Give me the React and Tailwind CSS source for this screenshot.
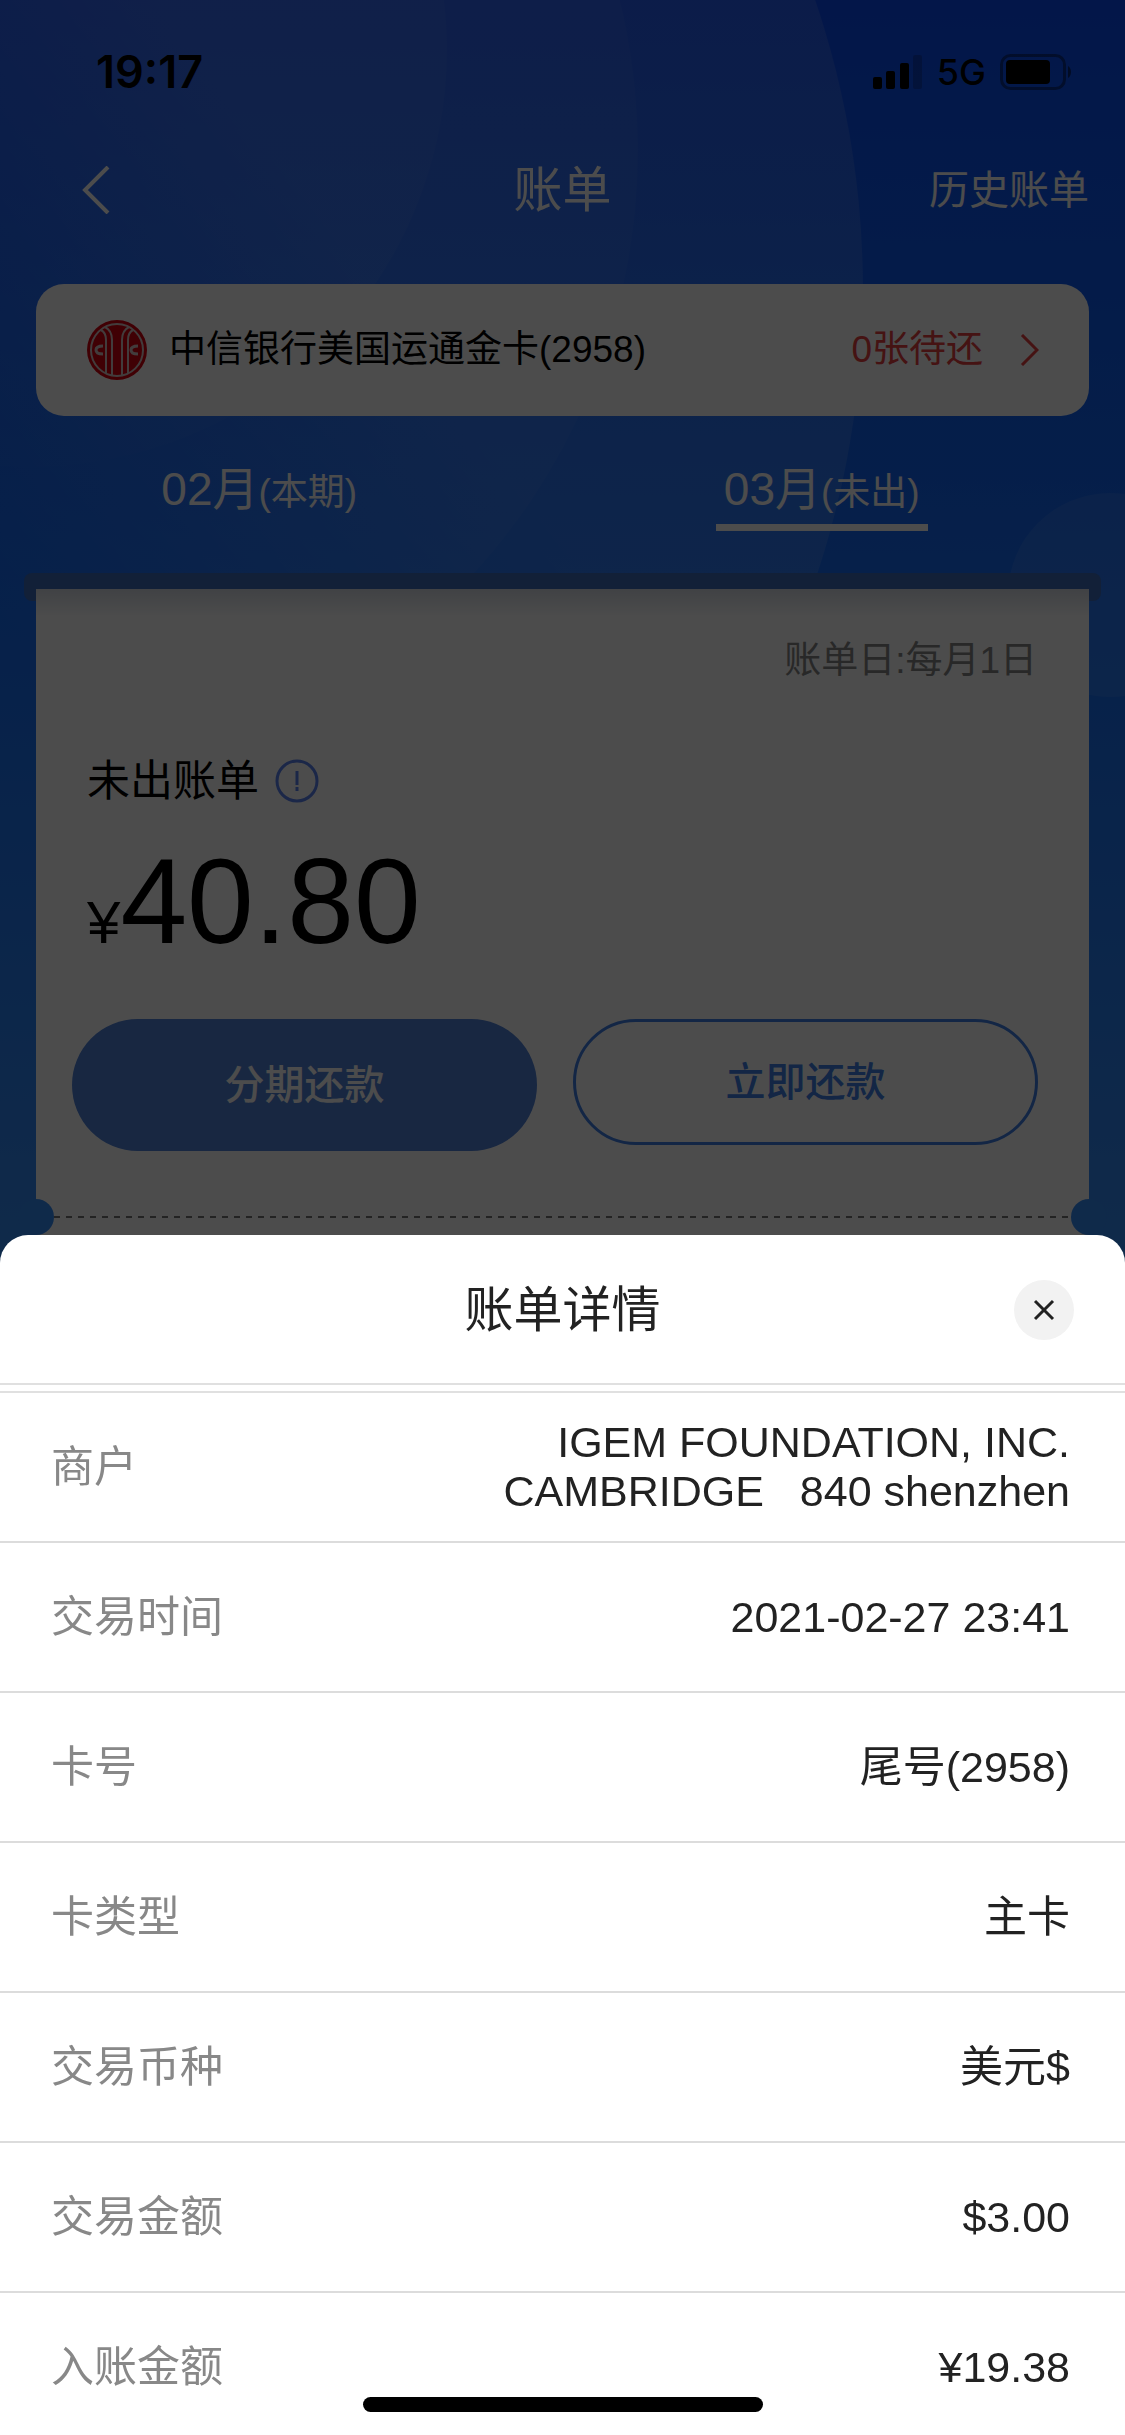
import React from 'react';
import { X } from 'lucide-react';

const details = [
  { label: '商户', value: 'IGEM FOUNDATION, INC.\nCAMBRIDGE   840 shenzhen' },
  { label: '交易时间', value: '2021-02-27 23:41' },
  { label: '卡号', value: '尾号(2958)' },
  { label: '卡类型', value: '主卡' },
  { label: '交易币种', value: '美元$' },
  { label: '交易金额', value: '$3.00' },
  { label: '入账金额', value: '¥19.38' },
];

const tabs = [
  { month: '02月', note: '(本期)', active: false },
  { month: '03月', note: '(未出)', active: true },
];

const Backdrop = () => (
  <svg
    className="absolute inset-x-0 top-0 h-[1250px] w-full"
    viewBox="0 0 1125 1250"
    preserveAspectRatio="xMidYMin slice"
    aria-hidden="true"
  >
    <defs>
      <linearGradient id="fade" gradientUnits="userSpaceOnUse" x1="-50" y1="560" x2="350" y2="260">
        <stop offset="0" stopColor="#fff" stopOpacity="0" />
        <stop offset="1" stopColor="#fff" stopOpacity="0.11" />
      </linearGradient>
    </defs>
    <circle cx="-40" cy="290" r="903" fill="url(#fade)" />
    <circle cx="10" cy="150" r="628" fill="url(#fade)" opacity="0.35" />
    <circle cx="30" cy="50" r="417" fill="url(#fade)" opacity="0.35" />
    <circle cx="1110" cy="595" r="102" fill="#fff" opacity="0.08" />
  </svg>
);

const StatusBar = () => (
  <div className="flex h-[132px] items-start justify-between pt-[46px] pr-[52px] pl-24 font-['Inter',sans-serif] text-black">
    <span className="text-[45px] leading-[52px] font-semibold">19:17</span>
    <div className="flex h-[52px] items-center gap-3.5">
      <svg width="50" height="34" viewBox="0 0 50 34" aria-hidden="true">
        <rect x="0" y="22" width="9" height="12" rx="2" />
        <rect x="13" y="16" width="9" height="18" rx="2" />
        <rect x="27" y="8" width="9" height="26" rx="2" />
        <rect x="40" y="0" width="9" height="34" rx="2" opacity="0.2" />
      </svg>
      <span className="text-[36px] leading-[52px] font-medium">5G</span>
      <svg width="73" height="36" viewBox="0 0 73 36" aria-hidden="true">
        <rect x="1.5" y="1.5" width="63" height="33" rx="9" fill="none" stroke="#000" strokeWidth="3" opacity="0.4" />
        <rect x="6" y="6" width="44" height="24" rx="4" />
        <path d="M68 12c4 2 4 10 0 12z" opacity="0.5" />
      </svg>
    </div>
  </div>
);

const BankLogo = () => (
  <svg width="60" height="60" viewBox="0 0 60 60" aria-hidden="true">
    <circle cx="30" cy="30" r="30" fill="#d8000f" />
    <g fill="none" stroke="#dccaca" strokeWidth="2">
      <circle cx="30" cy="30" r="26" />
      <path d="M14 10C18 12 19 15 19 20V53M25 55V20C25 13 22 9 18 7" />
      <path d="M46 10C42 12 41 15 41 20V53M35 55V20C35 13 38 9 42 7" />
      <path d="M16 26C11 26 9 28 9 30S11 34 16 34" strokeWidth="3" />
      <path d="M51 26C46 26 44 28 44 30S46 34 51 34" strokeWidth="3" />
    </g>
  </svg>
);

const BillPage = () => (
  <div className="relative min-h-screen overflow-hidden bg-linear-to-b from-[#0d4bf4] via-[#1b74f8] via-30% to-[#358cf8] to-50%">
    <Backdrop />
    <div className="relative">
      <StatusBar />
      <header className="grid h-[116px] grid-cols-3 items-center px-9 text-white">
        <button type="button" aria-label="返回" className="pl-[46px]">
          <svg width="28" height="48" viewBox="0 0 28 48" fill="none" stroke="currentColor" strokeWidth="4" aria-hidden="true">
            <path d="M26 1L3 24l23 23" />
          </svg>
        </button>
        <h1 className="text-center text-[49px] leading-[60px]">账单</h1>
        <a href="#history" className="text-right text-[40px] leading-[60px]">历史账单</a>
      </header>

      <button
        type="button"
        className="mx-9 mt-9 flex h-[132px] w-[calc(100%-72px)] items-center rounded-[28px] bg-white pr-[50px] pl-[51px] text-[37px] leading-[60px]"
      >
        <BankLogo />
        <span className="ml-[22px] text-black">中信银行美国运通金卡(2958)</span>
        <span className="ml-auto text-[#e84040]">0张待还</span>
        <svg className="ml-9" width="20" height="32" viewBox="0 0 20 32" fill="none" stroke="#e84040" strokeWidth="3" aria-hidden="true">
          <path d="M3 1l15 15L3 31" />
        </svg>
      </button>

      <nav className="mt-[42px] grid grid-cols-2 text-white">
        {tabs.map((tab) => (
          <div key={tab.month} className="flex justify-center pr-11">
            <button
              type="button"
              className={`border-b-[7px] px-2 text-[46px] leading-[62px] ${
                tab.active ? 'border-white' : 'border-transparent'
              }`}
            >
              {tab.month}
              <span className="text-[37px]">{tab.note}</span>
            </button>
          </div>
        ))}
      </nav>

      <div className="mx-6 mt-[42px] h-7 rounded-lg bg-[#3c6bbc]" />
      <section className="relative mx-9 -mt-3 bg-white bg-linear-to-b from-[#d8dde6] to-white to-[28px] pt-[42px] text-black">
        <p className="pr-[52px] text-right text-[37px] leading-[60px] text-[#888]">账单日:每月1日</p>
        <div className="mt-[60px] flex items-center gap-4 pl-[51px]">
          <h2 className="text-[43px] leading-[60px]">未出账单</h2>
          <svg width="44" height="44" viewBox="0 0 44 44" fill="none" stroke="#5b83f0" strokeWidth="3" aria-hidden="true">
            <circle cx="22" cy="22" r="20" />
            <path d="M22 12v14M22 28v4" />
          </svg>
        </div>
        <p className="mt-5 flex items-baseline pl-[51px] text-[120px] leading-[140px]">
          <span className="text-[60px] leading-none">¥</span>40.80
        </p>
        <div className="mt-12 grid grid-cols-2 items-start gap-9 pr-[51px] pl-9 text-[40px] font-medium">
          <button type="button" className="h-[132px] rounded-full bg-[#5082d9] text-white">分期还款</button>
          <button type="button" className="h-[126px] rounded-full border-[3px] border-[#4080e8] text-[#4080e8]">立即还款</button>
        </div>
        <div className="mt-12 flex items-center">
          <span className="-ml-[18px] size-9 rounded-full bg-[#358cf8]" />
          <span className="h-0.5 grow bg-[repeating-linear-gradient(90deg,#777_0_6px,transparent_6px_12px)]" />
          <span className="-mr-[18px] size-9 rounded-full bg-[#358cf8]" />
        </div>
        <div className="h-[400px]" />
      </section>
    </div>
  </div>
);

const DetailSheet = () => (
  <div
    role="dialog"
    aria-labelledby="sheet-title"
    className="fixed inset-x-0 bottom-0 flex max-h-[1200px] flex-col overflow-hidden rounded-t-[28px] bg-white text-[#222]"
  >
    <header className="grid shrink-0 grid-cols-[1fr_auto_1fr] items-center border-b-2 border-[#e0e0e0] px-[51px] pt-[45px] pb-[43px]">
      <h2 id="sheet-title" className="col-start-2 text-[49px] leading-[60px]">账单详情</h2>
      <button type="button" aria-label="关闭" className="grid size-[60px] place-items-center justify-self-end rounded-full bg-[#f2f2f2]">
        <X className="size-9" strokeWidth={2} strokeLinecap="butt" />
      </button>
    </header>
    <dl className="mt-1.5 min-h-0 overflow-y-auto border-t-2 border-[#e0e0e0] text-[43px] leading-[49px] [scrollbar-width:none]">
      {details.map((item) => (
        <div
          key={item.label}
          className="flex h-[150px] items-center justify-between border-b-2 border-[#dcdcdc] pr-[55px] pl-[51px]"
        >
          <dt className="text-[#888]">{item.label}</dt>
          <dd className="text-right whitespace-pre">{item.value}</dd>
        </div>
      ))}
    </dl>
    <div className="absolute bottom-[23px] left-1/2 h-[15px] w-[400px] -translate-x-1/2 rounded-full bg-black" />
  </div>
);

const App = () => (
  <div className="relative h-screen overflow-hidden font-['Liberation_Sans','Noto_Sans_CJK_SC',sans-serif]">
    <BillPage />
    <div className="fixed inset-0 bg-black/70" />
    <DetailSheet />
  </div>
);

export default App;
